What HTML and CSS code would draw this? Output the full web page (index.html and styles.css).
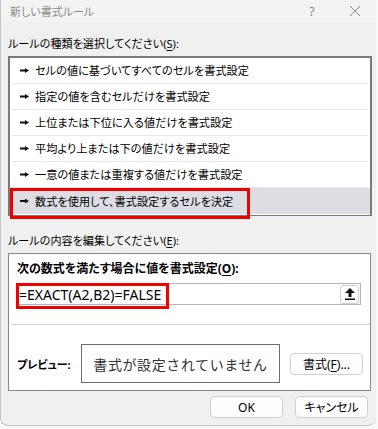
FILE: index.html
```html
<!DOCTYPE html>
<html lang="ja">
<head>
<meta charset="utf-8">
<title>新しい書式ルール</title>
<link rel="stylesheet" href="styles.css">
</head>
<body>
<div class="dialog">
  <div class="titlebar">
    <span class="title">新しい書式ルール</span>
    <span class="tb-help">?</span>
    <span class="tb-close">
      <svg width="12" height="12" viewBox="0 0 12 12"><path d="M1 1 L11 11 M11 1 L1 11" stroke="#8a8a8a" stroke-width="1"/></svg>
    </span>
  </div>

  <div class="section-label">ルールの種類を選択してください(<u>S</u>):</div>
  <div class="rule-list">
    <div class="rule"><span class="pointer"></span>セルの値に基づいてすべてのセルを書式設定</div>
    <div class="rule"><span class="pointer"></span>指定の値を含むセルだけを書式設定</div>
    <div class="rule"><span class="pointer"></span>上位または下位に入る値だけを書式設定</div>
    <div class="rule"><span class="pointer"></span>平均より上または下の値だけを書式設定</div>
    <div class="rule"><span class="pointer"></span>一意の値または重複する値だけを書式設定</div>
    <div class="rule selected"><span class="pointer"></span>数式を使用して、書式設定するセルを決定<span class="mark mark-rule"></span></div>
  </div>

  <div class="section-label label-edit">ルールの内容を編集してください(<u>E</u>):</div>
  <div class="edit-box">
    <div class="formula-label">次の数式を満たす場合に値を書式設定(<u>O</u>):</div>
    <div class="formula-input">
      <span class="formula-text">=EXACT(A2,B2)=FALSE</span>
      <span class="mark mark-formula"></span>
      <span class="collapse-btn">
        <svg width="10" height="12" viewBox="0 0 10 12"><path d="M5 0 L10 5 L6.5 5 L6.5 9 L3.5 9 L3.5 5 L0 5 Z" fill="#111"/><rect x="0" y="10.5" width="10" height="1.5" fill="#111"/></svg>
      </span>
    </div>
    <div class="divider"></div>
    <div class="preview-row">
      <span class="preview-label">プレビュー:</span>
      <div class="preview-box">書式が設定されていません</div>
      <button class="btn btn-format">書式(<u>F</u>)...</button>
    </div>
  </div>

  <div class="actions">
    <button class="btn btn-action">OK</button>
    <button class="btn btn-action">キャンセル</button>
  </div>
</div>
</body>
</html>
```

FILE: styles.css
```css
html, body { margin:0; padding:0; }
body {
  width:378px; height:429px; overflow:hidden;
  background:#fafafa;
  font-family:"Noto Sans", "Noto Sans CJK JP", sans-serif;
  font-size:11px; color:#000;
  font-feature-settings:"palt";
}
u { text-decoration-thickness:1px; text-underline-offset:2px; }

.dialog {
  width:376px; height:426px;
  background:#f0f0f0;
  border-left:1px solid #c4c4c4;
  border-bottom:1px solid #c4c4c4;
  border-radius:0 0 8px 8px;
  box-sizing:border-box;
  display:flex; flex-direction:column;
}

.titlebar {
  height:22px; flex:none;
  display:flex; align-items:center;
  background:#f3f3f3;
  color:#8c8c8c;
}
.title { padding-left:9px; flex:1; font-size:11px; }
.tb-help { width:14px; margin-right:26px; font-size:13px; color:#8c8c8c; }
.tb-close { width:12px; height:12px; margin-right:15px; display:flex; }

.section-label { margin:14px 0 0 7px; height:16px; line-height:16px; font-size:11.1px; }
.label-edit { margin-top:17px; }

.rule-list {
  margin:4px 4px 0 7px;
  border:2px solid #7a7a7a;
  border-bottom-width:1px;
  background:#fff;
  padding-bottom:1px;
}
.rule {
  position:relative;
  height:26px; line-height:25px;
  margin:0 2px;
  padding-left:8px;
  border-bottom:1px solid #e8e8e8;
  box-sizing:border-box;
  display:flex; align-items:center;
  font-size:11.2px;
}
.rule.selected { background:#dddde4; border-bottom:none; margin:0; padding-left:10px; }
.pointer {
  width:9px; height:5px; margin-right:6px; flex:none;
  background:#111;
  clip-path:polygon(0 30%, 55% 30%, 55% 0, 100% 50%, 55% 100%, 55% 70%, 0 70%);
}

.mark { position:absolute; border:3px solid #f00000; box-sizing:border-box; }
.mark-rule { left:0; top:0; width:240px; height:31px; }

.edit-box {
  margin:4px 5px 0 7px;
  height:138px;
  background:#fff;
  border:1px solid #8a8a8a;
  box-sizing:border-box;
  display:flex; flex-direction:column;
}
.formula-label { font-weight:bold; margin:7px 0 0 8px; height:16px; line-height:16px; font-size:12px; }
.formula-input {
  position:relative;
  margin:6px 9px 0 7px;
  height:22px;
  border:1px solid #b4b4b4;
  box-sizing:border-box;
  display:flex; align-items:center;
}
.formula-text { padding-left:2px; font-size:14px; flex:1; }
.mark-formula { left:-1px; top:-1px; width:153px; height:26px; }
.collapse-btn {
  width:19px; height:19px; margin-right:1px;
  border:1px solid #cfcfcf; border-radius:3px;
  box-sizing:border-box;
  display:flex; align-items:center; justify-content:center;
}

.divider { height:1px; background:#d0d0d0; margin:19px 0 0 2px; }

.preview-row { display:flex; align-items:center; margin:19px 0 0 8px; }
.preview-label { font-weight:bold; width:64px; font-size:11px; }
.preview-box {
  width:199px; height:39px;
  border:1px solid #6e6e6e;
  box-sizing:border-box;
  display:flex; align-items:center; justify-content:center;
  font-size:14px; letter-spacing:0.6px; color:#333;
  font-feature-settings:normal;
}

.btn {
  font:inherit;
  background:#fdfdfd;
  border:1px solid #d0d0d0;
  border-radius:4px;
  height:22px; padding:0;
  color:#000;
}
.btn-format { width:73px; margin-left:10px; font-size:12px; }

.actions { display:flex; justify-content:flex-end; gap:12px; margin:5px 8px 0 0; }
.btn-action { width:73px; font-size:12px; }
```
